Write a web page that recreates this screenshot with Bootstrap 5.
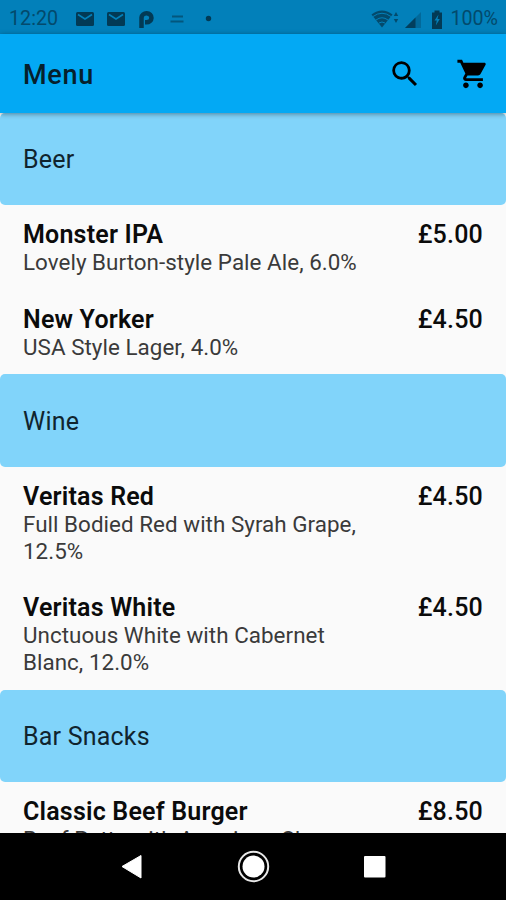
<!DOCTYPE html>
<html lang="en">
<head>
<meta charset="utf-8">
<meta name="viewport" content="width=device-width, initial-scale=1">
<title>Menu</title>
<link href="https://cdn.jsdelivr.net/npm/bootstrap@5.3.0/dist/css/bootstrap.min.css" rel="stylesheet">
<style>
body { font-family: Roboto, "Liberation Sans", sans-serif; background: #fafafa; color: #0b0b0b; }
.screen { height: 900px; }
.status { height: 34px; background: #0280ba; color: #034a6c; font-size: 19.7px; padding: 3px 8px 0 9px; }
.clock { width: 61px; }
.appbar { height: 79px; background: #03a9f4; padding: 0 16px 0 23px; box-shadow: 0 1px 5px rgba(0,0,0,.4); z-index: 2; }
.appbar-title { font-size: 27px; font-weight: 500; line-height: 30px; letter-spacing: .7px; color: #06202c; padding-top: 3px; }
.icon-gap { gap: 34px; }
.section-head { height: 92.3px; background: #81d4fa; border-radius: 5px; padding: 2px 23px 0; font-size: 25px; letter-spacing: .2px; color: #10242e; }
.item { padding: 16px 23px 13.5px; }
.item-name, .item-price { font-size: 25px; line-height: 28px; font-weight: 500; }
.item-name { font-weight: 600; letter-spacing: .2px; }
.item-price { letter-spacing: .2px; }
.item-desc { font-size: 22.4px; line-height: 27px; font-weight: 400; letter-spacing: .04px; color: #3a3a3a; width: 340px; }
.sysnav { height: 67px; background: #000; }
</style>
<script src="https://cdn.jsdelivr.net/npm/bootstrap@5.3.0/dist/js/bootstrap.bundle.min.js"></script>
</head>
<body>
<div class="screen d-flex flex-column overflow-hidden">
  <div class="status d-flex align-items-center flex-shrink-0">
    <span class="clock">12:20</span>
    <svg width="145" height="32" viewBox="70 0 145 32" class="me-auto">
      <g fill="#023a55">
        <rect x="76" y="9" width="18" height="14" rx="1.5"/><rect x="107" y="9" width="18" height="14" rx="1.5"/>
        <circle cx="208.500" cy="15.500" r="2.700"/>
      </g>
      <path d="M78 11.500l7 4.500 7-4.500M109 11.500l7 4.500 7-4.500" fill="none" stroke="#0280ba" stroke-width="1.600"/>
      <path d="M141.500 25V14.500a5 4.500 0 1 1 5 4.800h-1.500" fill="none" stroke="#023a55" stroke-width="4.500"/>
      <path d="M172 13.500h11M170.500 18.500h13" stroke="#03567d" stroke-width="2.200"/>
    </svg>
    <svg width="76" height="32" viewBox="371 0 76 32" class="me-1">
      <path d="M372.500 11.500Q383 3.500 393.500 11.500L383 24.500z" fill="#034a6c"/>
      <path d="M374 13.500q9-6.500 18 0M377 17q6-4.500 12 0M380 20q3-2 6 0" fill="none" stroke="#0280ba" stroke-width="1"/>
      <path d="M394.800 13l2.200-4 2.200 4zM394.800 16l2.200 4 2.200-4z" fill="#034a6c"/>
      <path d="M406 25l16-16v16z" fill="#02699a"/><path d="M406 25l10.500-10.500V25z" fill="#023f5d"/>
      <path d="M433 9.500h2.500V7.500h5v2h2.500V26h-10z" fill="#023a55"/>
      <path d="M439.500 11.500l-4 6h2.300l-1 5 4-6.500h-2.300z" fill="#0280ba"/>
    </svg>
    <span>100%</span>
  </div>
  <nav class="appbar d-flex align-items-center justify-content-between flex-shrink-0 position-relative">
    <span class="appbar-title">Menu</span>
    <div class="d-flex align-items-center icon-gap">
      <svg width="34" height="34" viewBox="0 0 24 24"><path d="M15.500 14h-.79l-.28-.27A6.470 6.470 0 0 0 16 9.500 6.500 6.500 0 1 0 9.500 16c1.610 0 3.090-.59 4.230-1.570l.27.28v.79l5 4.990L20.490 19l-4.990-5zm-6 0C7.010 14 5 11.990 5 9.500S7.010 5 9.500 5 14 7.010 14 9.500 11.990 14 9.500 14z"/></svg>
      <svg width="34" height="34" viewBox="0 0 24 24"><path d="M7 18c-1.100 0-1.990.9-1.990 2S5.900 22 7 22s2-.9 2-2-.9-2-2-2zM1 2v2h2l3.600 7.590-1.350 2.450c-.16.28-.25.61-.25.96 0 1.100.9 2 2 2h12v-2H7.420c-.14 0-.25-.11-.25-.25l.03-.12.9-1.630h7.450c.75 0 1.410-.41 1.750-1.030l3.580-6.490c.08-.14.12-.31.12-.48 0-.55-.45-1-1-1H5.210l-.94-2H1zm16 16c-1.100 0-1.990.9-1.990 2s.89 2 1.990 2 2-.9 2-2-.9-2-2-2z"/><path d="M5.500 5h14.500l-3.500 7H8.500z"/></svg>
    </div>
  </nav>
  <main class="flex-grow-1 overflow-hidden">
    <div class="section-head d-flex align-items-center">Beer</div>
    <div class="item">
      <div class="d-flex justify-content-between"><span class="item-name">Monster IPA</span><span class="item-price">£5.00</span></div>
      <div class="item-desc">Lovely Burton-style Pale Ale, 6.0%</div>
    </div>
    <div class="item">
      <div class="d-flex justify-content-between"><span class="item-name">New Yorker</span><span class="item-price">£4.50</span></div>
      <div class="item-desc">USA Style Lager, 4.0%</div>
    </div>
    <div class="section-head d-flex align-items-center">Wine</div>
    <div class="item">
      <div class="d-flex justify-content-between"><span class="item-name">Veritas Red</span><span class="item-price">£4.50</span></div>
      <div class="item-desc">Full Bodied Red with Syrah Grape, 12.5%</div>
    </div>
    <div class="item">
      <div class="d-flex justify-content-between"><span class="item-name">Veritas White</span><span class="item-price">£4.50</span></div>
      <div class="item-desc">Unctuous White with Cabernet Blanc, 12.0%</div>
    </div>
    <div class="section-head d-flex align-items-center">Bar Snacks</div>
    <div class="item">
      <div class="d-flex justify-content-between"><span class="item-name">Classic Beef Burger</span><span class="item-price">£8.50</span></div>
      <div class="item-desc">Beef Patty with American Cheese</div>
    </div>
  </main>
  <div class="sysnav flex-shrink-0">
    <svg class="d-block" width="506" height="67" viewBox="0 833 506 67">
      <path d="M122 866.500L141 855.500V878z" fill="#fff" stroke="#fff" stroke-linejoin="round"/>
      <circle cx="253.500" cy="866.500" r="14.700" fill="none" stroke="#e8e8e8" stroke-width="2"/>
      <circle cx="253.500" cy="866.500" r="11" fill="#fff"/>
      <rect x="364" y="856" width="21.500" height="21.500" rx="1" fill="#fff"/>
    </svg>
  </div>
</div>
</body>
</html>
